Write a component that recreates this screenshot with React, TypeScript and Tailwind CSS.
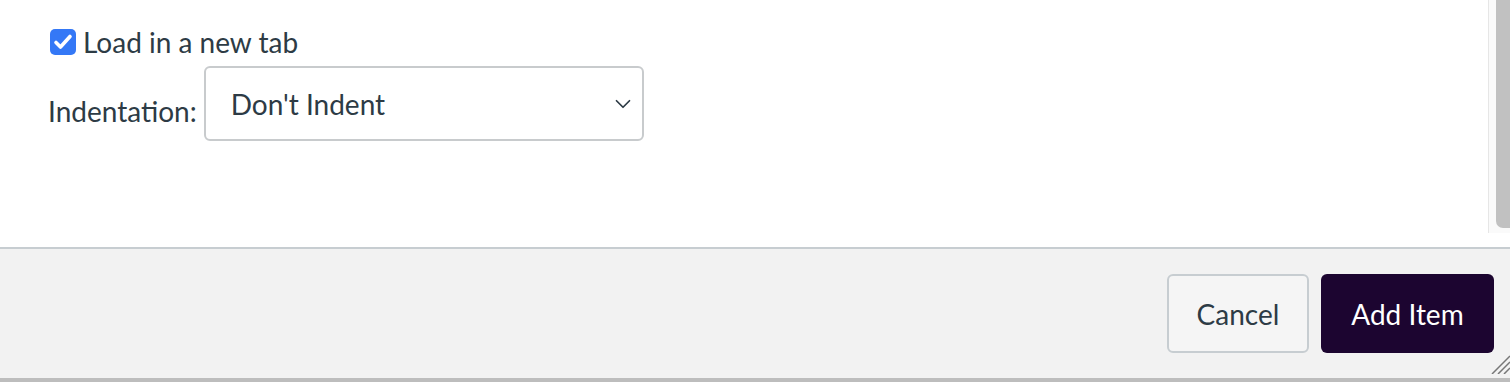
import { ChevronDown } from "lucide-react"

function CheckMark() {
  return (
    <div className="flex h-[26px] w-[26px] items-center justify-center rounded-[5px] bg-[#3478f6]">
      <svg width="26" height="26" viewBox="0 0 26 26" fill="none">
        <path d="M6 13.5l4.5 4.5L20 7.5" stroke="white" strokeWidth="3.6" strokeLinecap="round" strokeLinejoin="round" />
      </svg>
    </div>
  )
}

export default function App() {
  return (
    <div className="flex h-[382px] w-[1510px] flex-col overflow-hidden bg-white font-['Lato','Noto_Sans',sans-serif] text-[#2d3b45]">
      <div className="flex h-[247px]">
        <div className="flex-1 pl-[48px] pt-[29px]">
          <label className="ml-[2px] flex items-center gap-[7px] text-[28px] leading-[26px]">
            <CheckMark />
            <span>Load in a new tab</span>
          </label>
          <div className="mt-[11px] flex items-center">
            <span className="mt-[14px] text-[28px]">Indentation:</span>
            <div className="ml-[7px] flex h-[75px] w-[440px] items-center justify-between rounded-[6px] border-2 border-[#c8cbcd] pl-[25px] pr-[6px] text-[28px]">
              <span>Don't Indent</span>
              <ChevronDown className="h-[26px] w-[26px] text-[#2d3b45]" strokeWidth={1.6} />
            </div>
          </div>
        </div>
        <div className="flex h-[233px] w-[22px] justify-end border-l border-[#e6e6e6] bg-[#fafafa]">
          <div className="h-[228px] w-[14px] rounded-bl-[7px] bg-[#c1c1c1]" />
        </div>
      </div>
      <div className="relative flex h-[131px] justify-end gap-[12px] border-t-2 border-[#c7cdd1] bg-[#f2f2f2] py-[25px] pr-[16px]">
        <button className="h-[79px] w-[142px] rounded-[6px] border-2 border-[#c7cdd1] bg-[#f5f5f5] text-[28px] text-[#2d3b45]">
          Cancel
        </button>
        <button className="h-[79px] w-[173px] rounded-[6px] bg-[#1c0530] text-[28px] text-white">
          Add Item
        </button>
        <svg className="absolute bottom-[4px] right-0" width="22" height="22" viewBox="0 0 22 22">
          <path d="M22 4L4 22M22 10L10 22M22 16L16 22" stroke="#777" strokeWidth="1.5" />
        </svg>
      </div>
      <div className="h-[4px] bg-[#bdbdbd]" />
    </div>
  )
}
